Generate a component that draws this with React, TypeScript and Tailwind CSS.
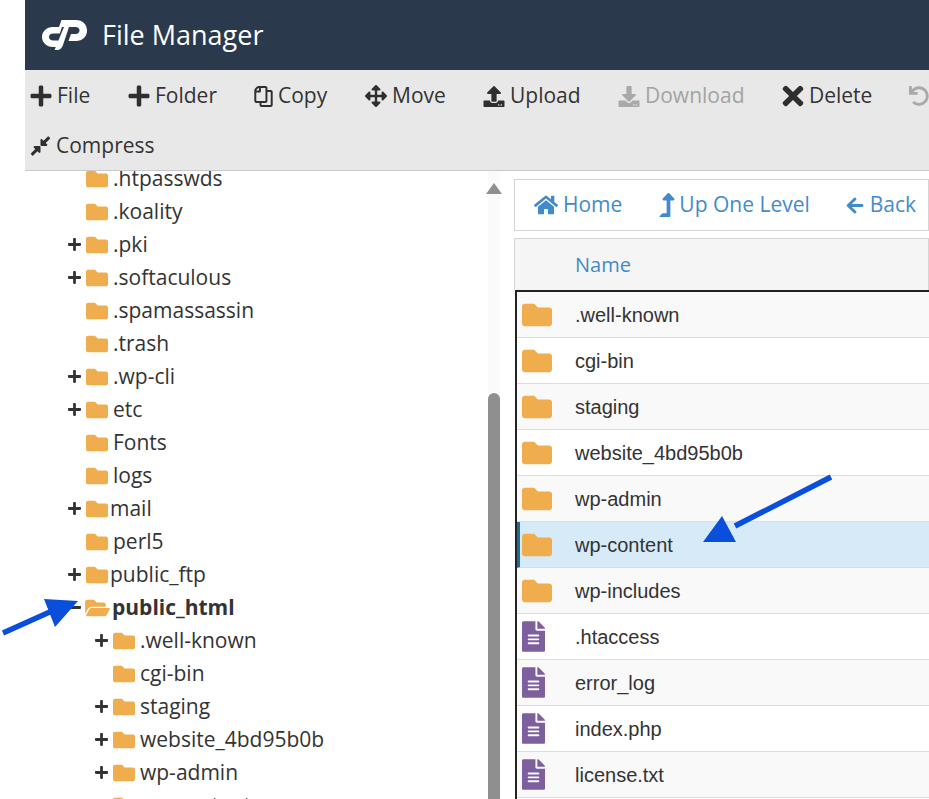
import { FaPlus, FaMinus, FaRegCopy, FaArrowsAlt, FaUpload, FaDownload, FaTimes, FaUndo, FaCompressAlt, FaHome, FaLevelUpAlt, FaArrowLeft, FaFolder, FaFolderOpen, FaFileAlt } from 'react-icons/fa';

const openSans = "font-['Open_Sans',sans-serif]";

const tree = [
  { name: '.htpasswds', depth: 0 },
  { name: '.koality', depth: 0 },
  { name: '.pki', depth: 0, plus: true },
  { name: '.softaculous', depth: 0, plus: true },
  { name: '.spamassassin', depth: 0 },
  { name: '.trash', depth: 0 },
  { name: '.wp-cli', depth: 0, plus: true },
  { name: 'etc', depth: 0, plus: true },
  { name: 'Fonts', depth: 0 },
  { name: 'logs', depth: 0 },
  { name: 'mail', depth: 0, plus: true, tight: true },
  { name: 'perl5', depth: 0 },
  { name: 'public_ftp', depth: 0, plus: true, tight: true },
  { name: 'public_html', depth: 0, open: true, tight: true },
  { name: '.well-known', depth: 1, plus: true },
  { name: 'cgi-bin', depth: 1 },
  { name: 'staging', depth: 1, plus: true },
  { name: 'website_4bd95b0b', depth: 1, plus: true },
  { name: 'wp-admin', depth: 1, plus: true },
  { name: 'wp-content', depth: 1, plus: true },
];

const files = [
  { name: '.well-known', folder: true },
  { name: 'cgi-bin', folder: true },
  { name: 'staging', folder: true },
  { name: 'website_4bd95b0b', folder: true },
  { name: 'wp-admin', folder: true },
  { name: 'wp-content', folder: true, selected: true },
  { name: 'wp-includes', folder: true },
  { name: '.htaccess' },
  { name: 'error_log' },
  { name: 'index.php' },
  { name: 'license.txt' },
  { name: 'readme.html' },
];

function ToolButton({ icon, label, className }: { icon: React.ReactNode; label: string; className: string }) {
  return (
    <div className={`flex items-center gap-[5px] h-[50px] text-[21px] ${className}`}>
      {icon}
      <span>{label}</span>
    </div>
  );
}

function Arrow({ className, x1, y1, x2, y2, head }: { className: string; x1: number; y1: number; x2: number; y2: number; head: string }) {
  return (
    <svg className={`absolute pointer-events-none ${className}`} fill="#0a4fdc" stroke="#0a4fdc">
      <line x1={x1} y1={y1} x2={x2} y2={y2} strokeWidth="5.5" />
      <polygon points={head} stroke="none" />
    </svg>
  );
}

export default function App() {
  return (
    <div className={`relative w-[929px] h-[799px] overflow-hidden bg-white ${openSans} text-[#333]`}>
      <div className="ml-[25px]">
        <header className="h-[70px] bg-[#2a3a4c] flex items-center pl-[17px] text-white">
          <svg width="45" height="30" viewBox="0 0 45 30" fill="#fff">
            <path d="M20 7H11C4.500 7 0 11.500 0 17C0 22.500 4.500 27 11 27H14.500L17 20.500H11.500C8.500 20.500 7 19 7 17C7 15 8.500 13.500 11.500 13.500H17.800z" />
            <path d="M19.500 0H34C40.500 0 45 4.500 45 10.500C45 16.500 40.500 21 34 21H26.500L29 14H33.500C36 14 37.500 12.500 37.500 10.500C37.500 8.500 36 7 33.500 7H27L21 25C20 28 18 30 15 30H12.500L22 7H17z" />
          </svg>
          <span className="ml-[15px] text-[27px]">File Manager</span>
        </header>
        <div className="h-[101px] pt-[1px] bg-[#e8e8e8] border-b border-[#c9c9c9] text-[#333]">
          <div className="flex items-center h-[50px] pl-[5px] whitespace-nowrap">
            <ToolButton className="w-[98px]" icon={<FaPlus className="w-[22px] h-[24px] text-[#2f2f2f]" />} label="File" />
            <ToolButton className="w-[126px]" icon={<FaPlus className="w-[22px] h-[24px] text-[#2f2f2f]" />} label="Folder" />
            <ToolButton className="w-[111px]" icon={<FaRegCopy className="w-[19px] h-[21px] text-[#2f2f2f] -scale-x-100" />} label="Copy" />
            <ToolButton className="w-[118px]" icon={<FaArrowsAlt className="w-[22px] h-[22px] text-[#2f2f2f]" />} label="Move" />
            <ToolButton className="w-[135px]" icon={<FaUpload className="w-[22px] h-[21px] text-[#2f2f2f]" />} label="Upload" />
            <ToolButton className="w-[164px] text-[#a3a3a3]" icon={<FaDownload className="w-[22px] h-[21px] text-[#a9a9a9]" />} label="Download" />
            <ToolButton className="w-[127px]" icon={<FaTimes className="w-[22px] h-[30px] text-[#2f2f2f]" />} label="Delete" />
            <FaUndo className="w-[20px] h-[20px] text-[#a9a9a9] shrink-0" />
          </div>
          <div className="flex pl-[5px]">
            <ToolButton className="" icon={<FaCompressAlt className="w-[21px] h-[22px] text-[#2f2f2f]" />} label="Compress" />
          </div>
        </div>
      </div>

      <div className="flex h-[628px] overflow-hidden">
        <aside className="w-[488px] shrink-0 overflow-hidden -mt-[9px]">
          {tree.map((item) => (
            <div key={item.name} className={`flex items-center h-[33px] text-[21px] whitespace-nowrap ${item.depth === 1 ? 'pl-[95px]' : 'pl-[68px]'}`}>
              <span className="w-[17px] shrink-0 flex items-center text-[#333]">
                {item.plus && <FaPlus className="w-[13px] h-[15px]" />}
                {item.open && <FaMinus className="w-[13px] h-[15px]" />}
              </span>
              {item.open ? (
                <FaFolderOpen className="w-[25px] h-[22px] text-[#f0ad4e] shrink-0" />
              ) : (
                <FaFolder className="w-[22px] h-[22px] text-[#f0ad4e] shrink-0 ml-[1px]" />
              )}
              <span className={`${item.tight ? 'ml-[2px]' : 'ml-[5px]'} ${item.open ? 'font-bold -ml-[1px]' : ''}`}>{item.name}</span>
            </div>
          ))}
        </aside>

        <div className="w-[12px] shrink-0 bg-[#fafafa] flex flex-col items-center">
          <svg className="mt-[12px] shrink-0 overflow-visible" width="12" height="11" viewBox="0 0 12 11" fill="#8f8f8f">
            <path d="M6 0l8 11H-2z" />
          </svg>
          <div className="w-[12px] h-[406px] mt-[199px] bg-[#8f8f8f] rounded-t-[6px] shrink-0" />
        </div>

        <main className="flex-1 ml-[14px] pt-[8px] min-w-0">
          <nav className="h-[52px] border border-[#d5d5d5] flex items-center pl-[19px] text-[21px] text-[#428bca] whitespace-nowrap overflow-hidden">
            <FaHome className="w-[24px] h-[22px] shrink-0" />
            <span className="ml-[5px]">Home</span>
            <FaLevelUpAlt className="w-[16px] h-[24px] ml-[37px] shrink-0" />
            <span className="ml-[4px]">Up One Level</span>
            <FaArrowLeft className="w-[18px] h-[19px] ml-[36px] shrink-0" />
            <span className="ml-[6px]">Back</span>
          </nav>
          <div className="h-[52px] mt-[7px] bg-[#f5f5f5] border border-[#d5d5d5] border-b-0 flex items-center pl-[60px] text-[20px] text-[#428bca]">
            Name
          </div>
          <div className="border-l-2 border-t-2 border-[#222] ml-[1px] font-['Liberation_Sans',sans-serif] text-[20px]">
            {files.map((file, i) => (
              <div
                key={file.name}
                className={`flex items-center h-[46px] border-b border-[#ddd] ${file.selected ? 'bg-[#d6eaf8] border-l-[3px] border-l-[#1b6d9c] pl-[2px]' : i % 2 === 0 ? 'bg-[#f9f9f9] pl-[5px]' : 'bg-white pl-[5px]'}`}
              >
                <span className="w-[53px] shrink-0">
                  {file.folder ? (
                    <FaFolder className="w-[30px] h-[30px] text-[#f0ad4e]" />
                  ) : (
                    <FaFileAlt className="w-[23px] h-[31px] text-[#7d5f9e]" />
                  )}
                </span>
                <span>{file.name}</span>
              </div>
            ))}
          </div>
        </main>
      </div>

      <Arrow className="left-0 top-[590px] w-[90px] h-[50px]" x1={3} y1={43} x2={52} y2={21} head="44,9 78,11 55,37" />
      <Arrow className="left-[695px] top-[470px] w-[145px] h-[80px]" x1={136} y1={7} x2={40} y2={56} head="8,72 27,46 41,72" />
    </div>
  );
}
